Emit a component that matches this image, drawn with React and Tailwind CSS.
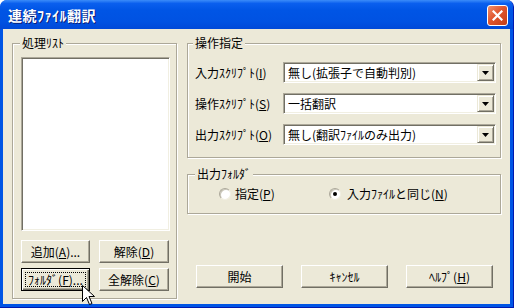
import React from 'react';

const raised =
  'border border-t-white border-l-white border-r-[#716f64] border-b-[#716f64] shadow-[inset_-1px_-1px_0_#aca899] bg-[#ece9d8]';
const sunken =
  'border border-t-[#aca899] border-l-[#aca899] border-r-white border-b-white shadow-[inset_1px_1px_0_#716f64,inset_-1px_-1px_0_#f1efe2]';
const etched =
  'relative border border-[#aca899] shadow-[inset_1px_1px_0_#fff,1px_1px_0_#fff]';

function Key({ children }) {
  return <span className="underline underline-offset-[1px]">{children}</span>;
}

function Button({ children, width, focused }) {
  if (focused) {
    return (
      <div
        className={`relative flex items-center justify-center h-[23px] ${width} border border-black bg-[#ece9d8] shadow-[inset_1px_1px_0_#fff,inset_-1px_-1px_0_#716f64,inset_-2px_-2px_0_#aca899]`}
      >
        <span className="absolute inset-[3px] border border-dotted border-black" />
        <span className="relative">{children}</span>
      </div>
    );
  }
  return (
    <div className={`flex items-center justify-center h-[23px] ${width} ${raised}`}>
      {children}
    </div>
  );
}

function Combo({ value }) {
  return (
    <div className={`flex w-[213px] h-[21px] bg-white ${sunken} p-[1px]`}>
      <div className="flex-1 flex items-center pl-[3px] whitespace-nowrap">{value}</div>
      <div className="w-[17px] h-full flex items-center justify-center border border-t-[#ece9d8] border-l-[#ece9d8] border-r-[#716f64] border-b-[#716f64] shadow-[inset_1px_1px_0_#fff,inset_-1px_-1px_0_#aca899] bg-[#ece9d8]">
        <svg width="7" height="4" viewBox="0 0 7 4">
          <path d="M0 0h7L3.5 4z" fill="#000" />
        </svg>
      </div>
    </div>
  );
}

function Radio({ checked }) {
  return (
    <span className="relative w-[12px] h-[12px] rounded-full bg-white border border-t-[#aca899] border-l-[#aca899] border-r-[#f1efe2] border-b-[#f1efe2] shadow-[inset_1px_1px_0_#c9c6b8] flex items-center justify-center">
      {checked && <span className="w-[4px] h-[4px] rounded-full bg-black" />}
    </span>
  );
}

const ROWS = [
  { label: '入力ｽｸﾘﾌﾟﾄ', key: 'I', value: '無し(拡張子で自動判別)' },
  { label: '操作ｽｸﾘﾌﾟﾄ', key: 'S', value: '一括翻訳' },
  { label: '出力ｽｸﾘﾌﾟﾄ', key: 'O', value: '無し(翻訳ﾌｧｲﾙのみ出力)' },
];

export default function App() {
  return (
    <div className="relative w-[514px] h-[308px] flex flex-col rounded-t-[7px] bg-[#0055e5] border-r border-b border-[#0019b0] overflow-hidden font-['Noto_Sans_CJK_JP',sans-serif] text-[12px] leading-[14px] text-black">
      {/* Title bar */}
      <div className="h-[29px] shrink-0 flex items-center justify-between pl-[8px] pr-[5px] bg-[linear-gradient(180deg,#3b8cf9_0%,#0a5fee_12%,#0055e5_35%,#0052e2_75%,#0049d8_100%)]">
        <span className="text-white font-bold text-[14px] tracking-[0.5px] [text-shadow:1px_1px_0_#0a1e7a]">
          連続ﾌｧｲﾙ翻訳
        </span>
        <div className="mt-[2px] w-[21px] h-[21px] rounded-[3px] border border-white bg-[linear-gradient(135deg,#f0906c_0%,#e0562e_45%,#c43d16_100%)] flex items-center justify-center">
          <svg width="11" height="11" viewBox="0 0 11 11">
            <path d="M1.5 1.5l8 8M9.5 1.5l-8 8" stroke="#fff" strokeWidth="2.2" strokeLinecap="square" />
          </svg>
        </div>
      </div>

      {/* Client area */}
      <div className="flex-1 ml-[3px] mr-[3px] mb-[3px] bg-[#ece9d8] flex pt-[14px] pl-[9px]">
        {/* 処理リスト */}
        <div className={`${etched} w-[165px] h-[256px] pl-[8px] pt-[13px]`}>
          <span className="absolute -top-[8px] left-[7px] px-[2px] bg-[#ece9d8]">処理ﾘｽﾄ</span>
          <div className={`w-[149px] h-[174px] bg-white ${sunken}`} />
          <div className="flex gap-[9px] mt-[9px]">
            <Button width="w-[69px]">
              追加(<Key>A</Key>)...
            </Button>
            <Button width="w-[70px]">
              解除(<Key>D</Key>)
            </Button>
          </div>
          <div className="flex gap-[9px] mt-[5px]">
            <Button width="w-[69px]" focused>
              ﾌｫﾙﾀﾞ(<Key>F</Key>)...
            </Button>
            <Button width="w-[70px]">
              全解除(<Key>C</Key>)
            </Button>
          </div>
        </div>

        {/* Right column */}
        <div className="ml-[10px] w-[314px] flex flex-col">
          <div className={`${etched} h-[115px] pl-[7px] pt-[18px] flex flex-col gap-[10px]`}>
            <span className="absolute -top-[8px] left-[5px] px-[2px] bg-[#ece9d8]">操作指定</span>
            {ROWS.map(row => (
              <div key={row.key} className="flex items-center">
                <span className="w-[88px] whitespace-nowrap">
                  {row.label}(<Key>{row.key}</Key>)
                </span>
                <Combo value={row.value} />
              </div>
            ))}
          </div>

          <div className={`${etched} mt-[16px] h-[40px] pl-[31px] pt-[12px] flex items-start`}>
            <span className="absolute -top-[8px] left-[7px] px-[2px] bg-[#ece9d8]">出力ﾌｫﾙﾀﾞ</span>
            <div className="w-[110px] flex items-center gap-[4px]">
              <Radio />
              <span>
                指定(<Key>P</Key>)
              </span>
            </div>
            <div className="flex items-center gap-[6px]">
              <Radio checked />
              <span>
                入力ﾌｧｲﾙと同じ(<Key>N</Key>)
              </span>
            </div>
          </div>

          <div className="flex gap-[18px] mt-[51px] ml-[9px]">
            <Button width="w-[87px]">開始</Button>
            <Button width="w-[87px]">ｷｬﾝｾﾙ</Button>
            <Button width="w-[87px]">
              ﾍﾙﾌﾟ(<Key>H</Key>)
            </Button>
          </div>
        </div>
      </div>

      {/* Mouse pointer */}
      <svg className="absolute left-[82px] top-[285px]" width="13" height="21" viewBox="0 0 13 21">
        <path
          d="M0.5 0.5v16l4-4 3 7 2.5-1-3-7h5.5z"
          fill="#fff"
          stroke="#000"
          strokeWidth="1"
          strokeLinejoin="miter"
        />
      </svg>
    </div>
  );
}
